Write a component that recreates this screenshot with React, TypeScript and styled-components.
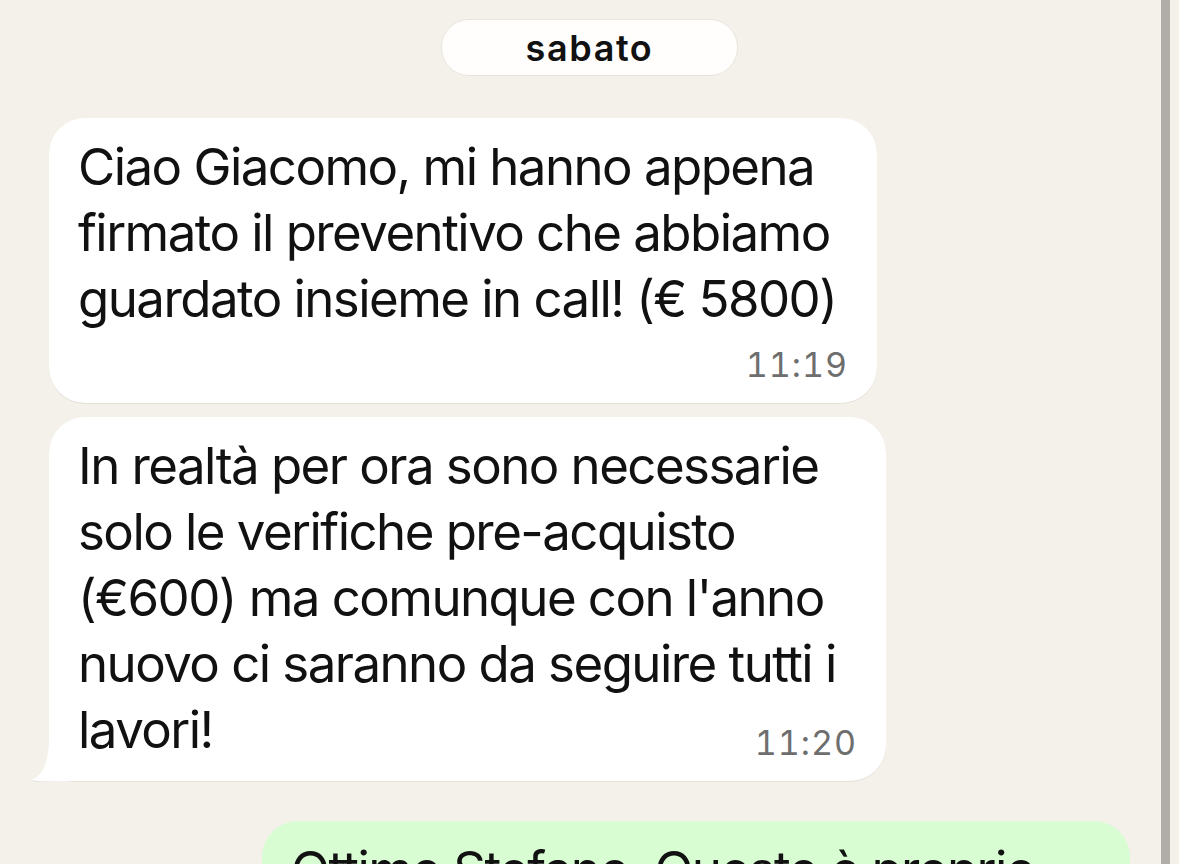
import React from 'react';
import styled, { createGlobalStyle } from 'styled-components';

const GlobalStyle = createGlobalStyle`
  html, body {
    margin: 0;
    padding: 0;
    background: #f4f1eb;
    overflow: hidden;
  }

  body {
    font-family: Inter, "Noto Sans", "Liberation Sans", sans-serif;
    color: #111111;
  }
`;

const Screen = styled.div`
  position: relative;
  width: 1179px;
  height: 864px;
  overflow: hidden;
  background: #f4f1eb;
`;

const Thread = styled.div`
  display: flex;
  flex-direction: column;
  padding: 19px 49px 0;
`;

const DateRow = styled.div`
  display: flex;
  justify-content: center;
  margin-bottom: 42px;
`;

const DatePill = styled.div`
  width: 295px;
  height: 55px;
  display: flex;
  align-items: center;
  justify-content: center;
  background: #fffefd;
  border: 1px solid #e9e5de;
  border-radius: 28px;
  font-size: 36px;
  font-weight: 600;
  letter-spacing: 1.6px;
`;

const Bubble = styled.div<{ $width: number; $tail?: boolean; $out?: boolean }>`
  position: relative;
  box-sizing: border-box;
  width: ${({ $width }) => $width}px;
  margin-bottom: 14px;
  margin-top: ${({ $out }) => ($out ? '26px' : '0')};
  align-self: ${({ $out }) => ($out ? 'flex-end' : 'flex-start')};
  padding: 16px 30px 18px 29px;
  background: ${({ $out }) => ($out ? '#d9fdd3' : '#ffffff')};
  border-radius: 36px;
  border-bottom-left-radius: ${({ $tail }) => ($tail ? '6px' : '36px')};
  box-shadow: 0 1px 0 #e4e0d8;
`;

const Tail = styled.svg`
  position: absolute;
  left: -18px;
  bottom: -1px;
  width: 40px;
  height: 46px;
`;

const Text = styled.div`
  font-size: 51px;
  line-height: 66px;
  letter-spacing: -1.55px;
  white-space: nowrap;
`;

const Footer = styled.div<{ $inline?: boolean }>`
  display: flex;
  align-items: flex-end;
  justify-content: ${({ $inline }) => ($inline ? 'space-between' : 'flex-end')};
  margin-top: ${({ $inline }) => ($inline ? '0' : '13px')};
`;

const Time = styled.span`
  font-size: 34px;
  line-height: 40px;
  color: #6e6e6e;
  font-feature-settings: "tnum" 1;
  letter-spacing: 1px;
  margin-right: -1px;
`;

const Scrollbar = styled.div`
  position: absolute;
  top: 0;
  right: 9px;
  width: 9px;
  height: 100%;
  background: #b1ada8;
`;

interface IMessage {
  lines: string[];
  time?: string;
  width: number;
  inlineTime?: boolean;
  tail?: boolean;
  out?: boolean;
}

const messages: IMessage[] = [
  {
    lines: [
      'Ciao Giacomo, mi hanno appena',
      'firmato il preventivo che abbiamo',
      'guardato insieme in call! (€ 5800)',
    ],
    time: '11:19',
    width: 828,
  },
  {
    lines: [
      'In realtà per ora sono necessarie',
      'solo le verifiche pre-acquisto',
      "(€600) ma comunque con l'anno",
      'nuovo ci saranno da seguire tutti i',
      'lavori!',
    ],
    time: '11:20',
    width: 837,
    inlineTime: true,
    tail: true,
  },
  {
    lines: ['Ottimo Stefano, Questo è proprio'],
    width: 868,
    out: true,
  },
];

function Message({ item }: { item: IMessage }) {
  const body = item.inlineTime ? item.lines.slice(0, -1) : item.lines;
  const last = item.inlineTime ? item.lines[item.lines.length - 1] : null;

  return (
    <Bubble $width={item.width} $tail={item.tail} $out={item.out}>
      {item.tail && (
        <Tail viewBox="0 0 40 46">
          <path
            d="M40 0 L40 46 L10 46 C4 46 0 45 0 44 C10 40 18 30 18 0 Z"
            fill="#ffffff"
          />
          <path
            d="M0 44 C4 46 10 46 40 46"
            fill="none"
            stroke="#e4e0d8"
            strokeWidth="1"
          />
        </Tail>
      )}
      <Text>
        {body.map((line) => (
          <div key={line}>{line}</div>
        ))}
      </Text>
      {item.time && (
        <Footer $inline={item.inlineTime}>
          {last && <Text>{last}</Text>}
          <Time>{item.time}</Time>
        </Footer>
      )}
    </Bubble>
  );
}

export default function App() {
  return (
    <Screen>
      <GlobalStyle />
      <Thread>
        <DateRow>
          <DatePill>sabato</DatePill>
        </DateRow>
        {messages.map((item) => (
          <Message key={item.lines[0]} item={item} />
        ))}
      </Thread>
      <Scrollbar />
    </Screen>
  );
}
